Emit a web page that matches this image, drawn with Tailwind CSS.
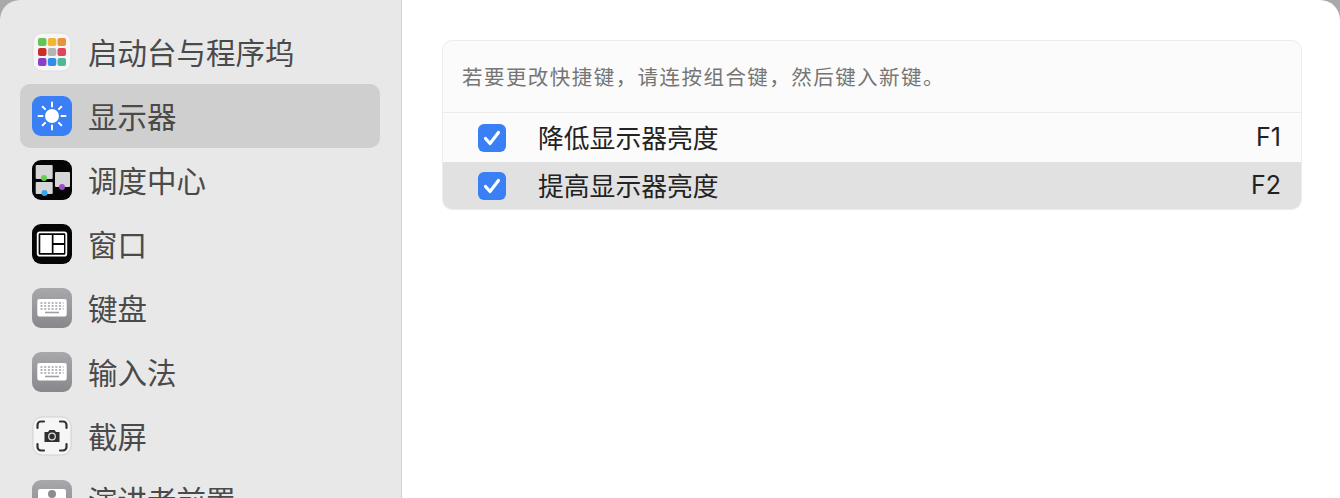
<!DOCTYPE html>
<html lang="zh">
<head>
    <meta charset="UTF-8">
    <title>显示器</title>
    <script src="https://cdn.jsdelivr.net/npm/@tailwindcss/browser@4"></script>
</head>
<body class="bg-[#a9a9a9] overflow-hidden font-['Noto_Sans_CJK_SC','Liberation_Sans',sans-serif]">
    <div class="w-[1340px] h-[498px] flex rounded-t-[20px] overflow-hidden">
        <!-- Sidebar -->
        <aside class="w-[402px] h-full shrink-0 bg-[#e8e8e8] border-r border-r-[#d2d2d2] pl-5 pr-[21px] pt-5 overflow-hidden text-[#4a4a4a] text-[29.5px] leading-none">
            <div class="h-16 flex items-center gap-4 px-3">
                <svg class="w-10 h-10 shrink-0" viewBox="0 0 40 40">
                    <rect x="1" y="1" width="38" height="38" rx="9" fill="#f6f6f6" stroke="#dedede"/>
                    <rect x="6" y="6" width="8.500" height="8" rx="2" fill="#62c554"/>
                    <rect x="15.800" y="6" width="8.500" height="8" rx="2" fill="#f2b534"/>
                    <rect x="25.500" y="6" width="8.500" height="8" rx="2" fill="#e8923a"/>
                    <rect x="6" y="16" width="8.500" height="8" rx="2" fill="#c9302c"/>
                    <rect x="15.800" y="16" width="8.500" height="8" rx="2" fill="#b5b5b5"/>
                    <rect x="25.500" y="16" width="8.500" height="8" rx="2" fill="#e2445c"/>
                    <rect x="6" y="26" width="8.500" height="8" rx="2" fill="#8a3fc8"/>
                    <rect x="15.800" y="26" width="8.500" height="8" rx="2" fill="#2f8fe8"/>
                    <rect x="25.500" y="26" width="8.500" height="8" rx="2" fill="#4fb896"/>
                </svg>
                <span>启动台与程序坞</span>
            </div>
            <div class="h-16 flex items-center gap-4 px-3 bg-[#cfcfcf] rounded-[10px]">
                <svg class="w-10 h-10 shrink-0" viewBox="0 0 40 40">
                    <rect width="40" height="40" rx="9" fill="#3a7ff6"/>
                    <circle cx="20" cy="20" r="7" fill="#fff"/>
                    <path d="M20 6.500v4M20 29.500v4M6.500 20h4M29.500 20h4M10.700 10.700l2.400 2.400M26.900 26.900l2.400 2.400M10.700 29.300l2.400-2.400M26.900 13.100l2.400-2.400" stroke="#fff" stroke-width="2" stroke-linecap="round"/>
                </svg>
                <span>显示器</span>
            </div>
            <div class="h-16 flex items-center gap-4 px-3">
                <svg class="w-10 h-10 shrink-0" viewBox="0 0 40 40">
                    <rect width="40" height="40" rx="9" fill="#050505"/>
                    <rect x="3.700" y="5" width="17" height="14" rx="1" fill="#d6d6d6"/>
                    <rect x="3.700" y="22" width="17" height="12" rx="1" fill="#d6d6d6"/>
                    <rect x="23" y="12" width="15" height="15" rx="1" fill="#d6d6d6"/>
                    <circle cx="12" cy="18" r="3" fill="#62d04f"/>
                    <circle cx="12.500" cy="33" r="3" fill="#35a5ee"/>
                    <circle cx="30" cy="27" r="3" fill="#9a4fd0"/>
                </svg>
                <span>调度中心</span>
            </div>
            <div class="h-16 flex items-center gap-4 px-3">
                <svg class="w-10 h-10 shrink-0" viewBox="0 0 40 40">
                    <rect width="40" height="40" rx="9" fill="#050505"/>
                    <rect x="5.700" y="8.300" width="28.600" height="23.400" rx="2" fill="none" stroke="#fff" stroke-width="1.800"/>
                    <rect x="8.300" y="11" width="11.500" height="18" fill="#fff"/>
                    <rect x="21.500" y="11" width="10.500" height="8" fill="#fff"/>
                    <rect x="21.500" y="21" width="10.500" height="8" fill="#fff"/>
                </svg>
                <span>窗口</span>
            </div>
            <div class="h-16 flex items-center gap-4 px-3">
                <svg class="w-10 h-10 shrink-0" viewBox="0 0 40 40">
                    <defs><linearGradient id="kb" x1="0" y1="0" x2="0" y2="1"><stop offset="0" stop-color="#a8a8ac"/><stop offset="1" stop-color="#88888c"/></linearGradient></defs>
                    <rect width="40" height="40" rx="9" fill="url(#kb)"/>
                    <rect x="5.300" y="11" width="29.400" height="17.500" rx="2" fill="#fff"/>
                    <path d="M8.500 15h23M8.500 18h23M8.500 21h23" stroke="#a0a0a4" stroke-width="1.600" stroke-dasharray="2 1.700"/>
                    <path d="M13 24.500h14" stroke="#a0a0a4" stroke-width="1.600"/>
                </svg>
                <span>键盘</span>
            </div>
            <div class="h-16 flex items-center gap-4 px-3">
                <svg class="w-10 h-10 shrink-0" viewBox="0 0 40 40">
                    <rect width="40" height="40" rx="9" fill="url(#kb)"/>
                    <rect x="5.300" y="11" width="29.400" height="17.500" rx="2" fill="#fff"/>
                    <path d="M8.500 15h23M8.500 18h23M8.500 21h23" stroke="#a0a0a4" stroke-width="1.600" stroke-dasharray="2 1.700"/>
                    <path d="M13 24.500h14" stroke="#a0a0a4" stroke-width="1.600"/>
                </svg>
                <span>输入法</span>
            </div>
            <div class="h-16 flex items-center gap-4 px-3">
                <svg class="w-10 h-10 shrink-0" viewBox="0 0 40 40">
                    <rect x="1" y="1" width="38" height="38" rx="9" fill="#f6f6f6" stroke="#d0d0d0"/>
                    <path d="M5.500 12V9a3.500 3.500 0 0 1 3.500-3.500h3M28 5.500h3a3.500 3.500 0 0 1 3.500 3.500v3M34.500 28v3a3.500 3.500 0 0 1-3.500 3.500h-3M12 34.500H9a3.500 3.500 0 0 1-3.500-3.500v-3" fill="none" stroke="#333" stroke-width="2.200" stroke-linecap="round"/>
                    <path d="M12.500 16h3.500l1.500-2h5l1.500 2h3.500v10h-15z" fill="#2f2f2f"/>
                    <circle cx="20" cy="20.500" r="3.300" fill="none" stroke="#ddd" stroke-width="1.300"/>
                </svg>
                <span>截屏</span>
            </div>
            <div class="h-16 flex items-center gap-4 px-3">
                <svg class="w-10 h-10 shrink-0" viewBox="0 0 40 40">
                    <rect width="40" height="40" rx="9" fill="url(#kb)"/>
                    <rect x="6" y="9" width="28" height="24" rx="2" fill="#fff"/>
                    <circle cx="20" cy="14" r="4" fill="#8c8c90"/>
                    <path d="M12 28a8 8 0 0 1 16 0z" fill="#8c8c90"/>
                </svg>
                <span>演讲者前置</span>
            </div>
        </aside>
        <!-- Main -->
        <main class="flex-1 bg-white pt-10 pl-10 pr-[38px]">
            <div class="h-[170px] rounded-[10px] border border-[#ececec] bg-[#fbfbfb] overflow-hidden flex flex-col">
                <div class="h-[71px] shrink-0 flex items-center px-[19px] text-[#757575] text-[20.5px] tracking-[1.45px]">若要更改快捷键，请连按组合键，然后键入新键。</div>
                <div class="h-[50px] shrink-0 border-t border-t-[#ececec] flex items-center pl-[35px] pr-[20px] text-[#222] text-[25.8px]">
                    <svg class="w-7 h-7 shrink-0 mr-[32px]" viewBox="0 0 28 28">
                        <rect width="28" height="28" rx="6" fill="#3a7ff6"/>
                        <path d="M7.500 14.500l4.500 5 8.500-11" fill="none" stroke="#fff" stroke-width="3.200" stroke-linecap="round" stroke-linejoin="round"/>
                    </svg>
                    <span>降低显示器亮度</span>
                    <span class="ml-auto mt-px text-[25px] font-['Inter','Liberation_Sans',sans-serif]">F1</span>
                </div>
                <div class="flex-1 bg-[#e1e1e1] flex items-center pl-[35px] pr-[20px] text-[#222] text-[25.8px]">
                    <svg class="w-7 h-7 shrink-0 mr-[32px]" viewBox="0 0 28 28">
                        <rect width="28" height="28" rx="6" fill="#3a7ff6"/>
                        <path d="M7.500 14.500l4.500 5 8.500-11" fill="none" stroke="#fff" stroke-width="3.200" stroke-linecap="round" stroke-linejoin="round"/>
                    </svg>
                    <span>提高显示器亮度</span>
                    <span class="ml-auto mt-px text-[25px] font-['Inter','Liberation_Sans',sans-serif]">F2</span>
                </div>
            </div>
        </main>
    </div>
</body>
</html>
